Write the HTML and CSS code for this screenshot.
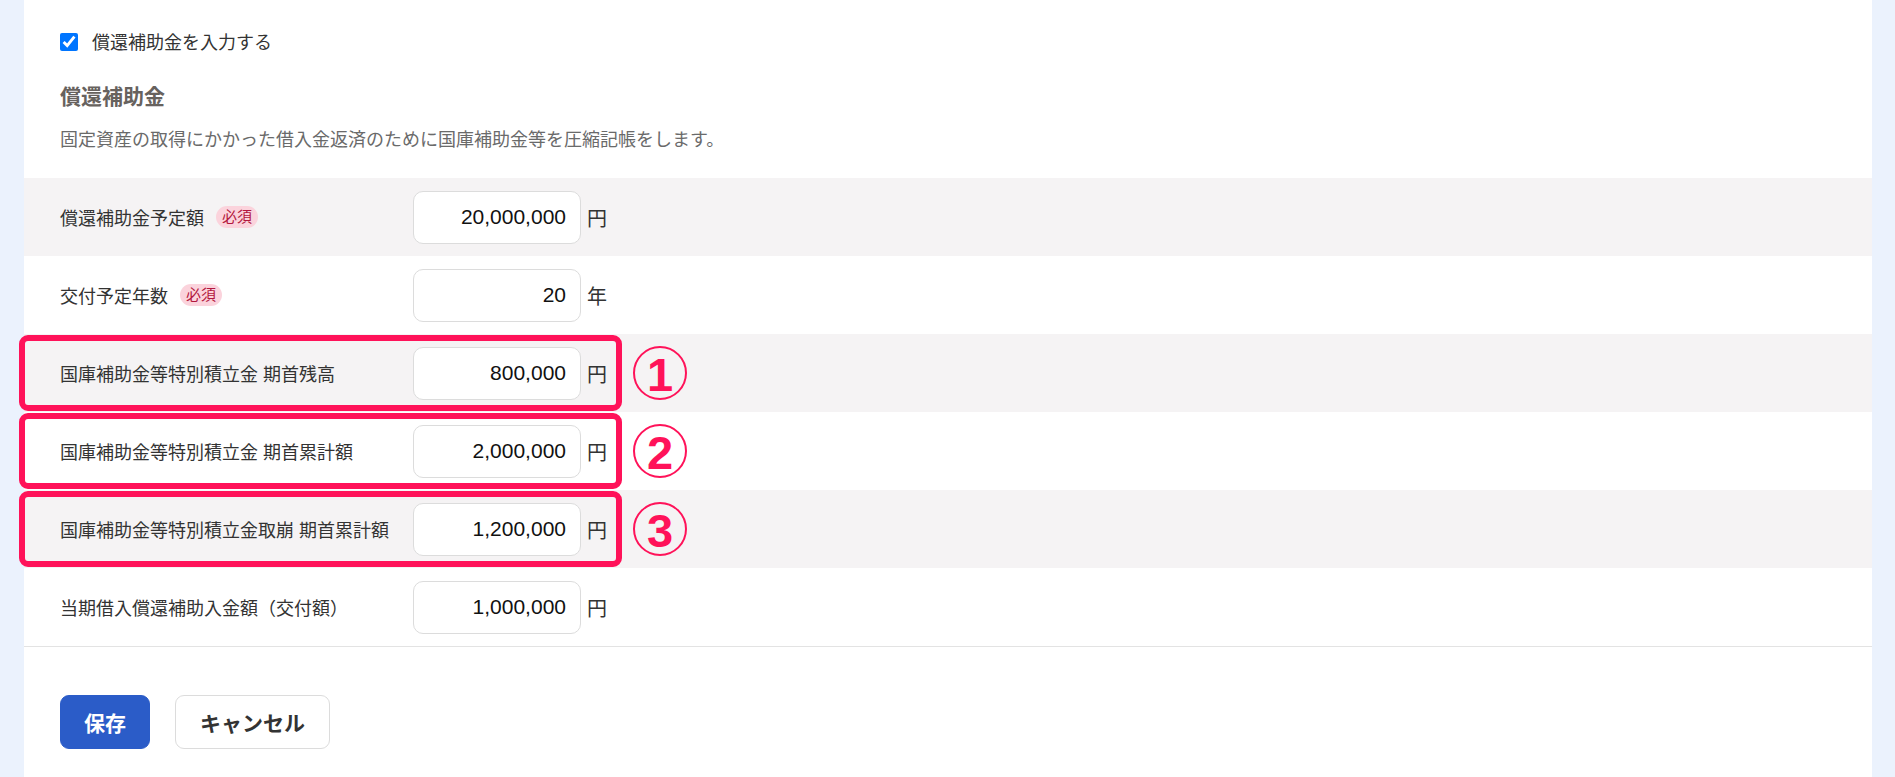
FILE: index.html
```html
<!DOCTYPE html>
<html lang="ja">
<head>
    <meta charset="UTF-8">
    <meta name="viewport" content="width=device-width, initial-scale=1.0">
    <title>償還補助金</title>
    <link rel="stylesheet" href="styles.css">
</head>
<body>
    <main class="card">
        <section class="intro">
            <label class="check">
                <input type="checkbox" checked>
                <span>償還補助金を入力する</span>
            </label>
            <h2 class="section-title">償還補助金</h2>
            <p class="section-desc">固定資産の取得にかかった借入金返済のために国庫補助金等を圧縮記帳をします。</p>
        </section>

        <div class="rows">
            <div class="row shaded">
                <div class="row-label">償還補助金予定額 <span class="badge">必須</span></div>
                <input class="amount" type="text" value="20,000,000">
                <span class="unit">円</span>
            </div>
            <div class="row">
                <div class="row-label">交付予定年数 <span class="badge">必須</span></div>
                <input class="amount" type="text" value="20">
                <span class="unit">年</span>
            </div>
            <div class="row shaded">
                <div class="mark"></div>
                <div class="row-label">国庫補助金等特別積立金 期首残高</div>
                <input class="amount" type="text" value="800,000">
                <span class="unit">円</span>
                <span class="num">1</span>
            </div>
            <div class="row">
                <div class="mark"></div>
                <div class="row-label">国庫補助金等特別積立金 期首累計額</div>
                <input class="amount" type="text" value="2,000,000">
                <span class="unit">円</span>
                <span class="num">2</span>
            </div>
            <div class="row shaded">
                <div class="mark"></div>
                <div class="row-label">国庫補助金等特別積立金取崩 期首累計額</div>
                <input class="amount" type="text" value="1,200,000">
                <span class="unit">円</span>
                <span class="num">3</span>
            </div>
            <div class="row">
                <div class="row-label">当期借入償還補助入金額（交付額）</div>
                <input class="amount" type="text" value="1,000,000">
                <span class="unit">円</span>
            </div>
        </div>

        <div class="actions">
            <button class="btn btn-primary">保存</button>
            <button class="btn btn-plain">キャンセル</button>
        </div>
    </main>
</body>
</html>
```

FILE: styles.css
```css
:root {
    --text: #333;
    --muted: #6a6a6a;
    --shade: #f5f3f4;
    --mark: #ff1259;
    --blue: #2b5cc8;
}

* {
    box-sizing: border-box;
    margin: 0;
    padding: 0;
}

body {
    font-family: "Liberation Sans", "Noto Sans CJK JP", sans-serif;
    background: #ebf2fd;
    color: var(--text);
    height: 777px;
    overflow: hidden;
}

.card {
    background: #fff;
    margin: 0 23px 0 24px;
    min-height: 100vh;
}

.intro {
    padding: 31px 36px 25px;
}

.check {
    display: flex;
    align-items: center;
    height: 24px;
    font-size: 18px;
    line-height: 24px;
}

.check input {
    width: 18px;
    height: 18px;
    margin: -3px 14px 0 0;
}

.section-title {
    margin-top: 27px;
    font-size: 21px;
    line-height: 30px;
    font-weight: 700;
    color: #67625e;
}

.section-desc {
    margin-top: 15px;
    font-size: 18px;
    line-height: 26px;
    color: var(--muted);
}

.row {
    position: relative;
    display: flex;
    align-items: center;
    height: 78px;
    padding-left: 36px;
    font-size: 18px;
}

.row.shaded {
    background: var(--shade);
}

.row-label {
    width: 353px;
    display: flex;
    align-items: center;
    gap: 12px;
    white-space: nowrap;
}

.badge {
    display: inline-block;
    height: 22px;
    line-height: 22px;
    padding: 0 6px;
    border-radius: 11px;
    background: #fbd3dc;
    color: #b3173e;
    font-size: 15px;
}

.amount {
    width: 168px;
    height: 53px;
    padding: 0 14px;
    border: 1px solid #dcdcdc;
    border-radius: 10px;
    background: #fff;
    font-family: "Liberation Sans", sans-serif;
    font-size: 21px;
    color: #111;
    text-align: right;
    outline: none;
}

.unit {
    margin-left: 6px;
    font-size: 20px;
}

/* annotation frames */
.mark {
    position: absolute;
    left: -5px;
    top: 1px;
    bottom: 1px;
    width: 603px;
    border: 6px solid var(--mark);
    border-radius: 9px;
}

.num {
    margin-left: 26px;
    width: 54px;
    height: 54px;
    border: 2px solid var(--mark);
    border-radius: 50%;
    display: flex;
    align-items: center;
    justify-content: center;
    color: var(--mark);
    font-size: 47px;
    font-weight: 700;
    line-height: 1;
    padding-top: 2px;
}

.actions {
    display: flex;
    gap: 25px;
    border-top: 1px solid #e3e3e3;
    padding: 48px 36px;
}

.btn {
    height: 54px;
    border-radius: 9px;
    font-family: "Noto Sans CJK JP", sans-serif;
    font-size: 21px;
    font-weight: 700;
    cursor: pointer;
}

.btn-primary {
    padding: 0 23px;
    background: var(--blue);
    border: 1px solid var(--blue);
    color: #fff;
}

.btn-plain {
    padding: 0 24px;
    background: #fff;
    border: 1px solid #dcdcdc;
    color: #333;
}
```
